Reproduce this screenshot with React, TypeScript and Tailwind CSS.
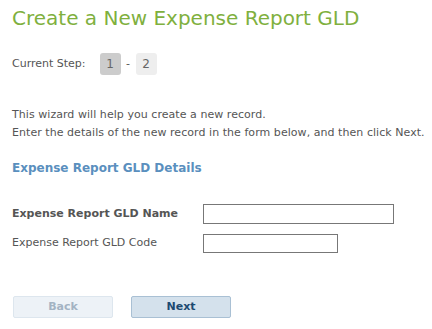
function StepBox({ n, active }: { n: string; active?: boolean }) {
	return (
		<span
			className={
				'flex h-[22px] w-[21px] items-center justify-center rounded-[3px] text-[12px] text-[#666] ' +
				(active ? 'bg-[#cccccc]' : 'bg-[#eeeeee]')
			}
		>
			{n}
		</span>
	)
}

function App() {
	return (
		<div
			className="h-[329px] w-[432px] bg-white px-3 text-[11px] text-[#555]"
			style={{ fontFamily: '"DejaVu Sans", Tahoma, sans-serif' }}
		>
			<h1 className="pt-[5px] text-[20px] leading-[26px] text-[#7fb03e]">Create a New Expense Report GLD</h1>

			<div className="mt-[22px] flex items-center">
				<span className="mr-[14px]">Current Step:</span>
				<StepBox n="1" active />
				<span className="mx-[4px] w-[7px] text-center">-</span>
				<StepBox n="2" />
			</div>

			<div className="mt-[31px] whitespace-nowrap leading-[18px] tracking-[0.05px]">
				<p>This wizard will help you create a new record.</p>
				<p>Enter the details of the new record in the form below, and then click Next.</p>
			</div>

			<h2 className="mt-[17px] text-[12px] font-bold text-[#5a8fbe]">Expense Report GLD Details</h2>

			<div className="mt-[27px] flex flex-col gap-[10px]">
				<div className="flex items-center">
					<label className="w-[191px] font-bold">Expense Report GLD Name</label>
					<input className="h-[20px] w-[191px] border border-[#777] bg-white outline-none" />
				</div>
				<div className="flex items-center">
					<label className="w-[191px]">Expense Report GLD Code</label>
					<input className="h-[19px] w-[135px] border border-[#777] bg-white outline-none" />
				</div>
			</div>

			<div className="mt-[43px] flex gap-[18px] pl-px">
				<button className="h-[22px] w-[100px] rounded-[2px] border border-[#dde6ee] bg-[#edf2f7] font-bold text-[#a3b3c3]">
					Back
				</button>
				<button className="h-[22px] w-[100px] rounded-[2px] border border-[#a9c0d4] bg-[#d4e1ec] font-bold text-[#1d4a72]">
					Next
				</button>
			</div>
		</div>
	)
}

export default App
